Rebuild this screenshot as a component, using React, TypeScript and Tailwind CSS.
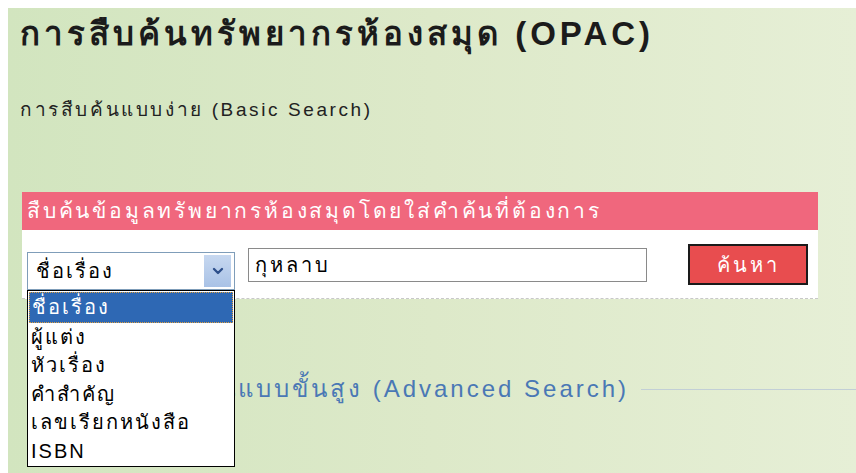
import { ChevronDown } from 'lucide-react'

const fieldOptions = ['ชื่อเรื่อง', 'ผู้แต่ง', 'หัวเรื่อง', 'คำสำคัญ', 'เลขเรียกหนังสือ', 'ISBN']

const thaiFont = "font-['Tahoma','Liberation_Sans','Noto_Sans',sans-serif]"

export default function App() {
  return (
    <div className={`w-[856px] h-[473px] overflow-hidden bg-white pl-2 pt-2 ${thaiFont}`}>
      <div className="relative h-full bg-gradient-to-r from-[#d2e5bf] via-[#dde9c9] to-[#e6efd6] pl-3 pt-[6px]">
        {/* Page title */}
        <h1 className="text-[33px] font-bold leading-[40px] tracking-[4px] text-[#1b1b1b]">
          การสืบค้นทรัพยากรห้องสมุด (OPAC)
        </h1>

        <p className="mt-[44px] text-[19px] leading-6 tracking-[2.6px] text-[#222]">
          การสืบค้นแบบง่าย (Basic Search)
        </p>

        {/* Basic search panel */}
        <div className="mt-[70px] ml-[2px] w-[796px] bg-white border-b border-dashed border-[#c8c8c8]">
          <div className="h-[38px] bg-[#f0677d] px-[5px] text-[21px] leading-[38px] tracking-[2.8px] text-white">
            สืบค้นข้อมูลทรัพยากรห้องสมุดโดยใส่คำค้นที่ต้องการ
          </div>
          <div className="flex items-start h-[68px] pl-[5px] pt-[14px]">
            <div className="relative mt-[8px] flex h-[38px] w-[208px] items-center border border-[#7f9db9] bg-white">
              <span className="flex-1 pl-2 text-[20px] tracking-[2px] text-black">ชื่อเรื่อง</span>
              <span className="mr-[3px] flex h-[32px] w-[27px] items-center justify-center bg-gradient-to-b from-[#c7d8f0] to-[#a9c2e6]">
                <ChevronDown className="h-4 w-4 text-[#2d4f8a]" strokeWidth={3.5} />
              </span>

              {/* Open option list */}
              <ul className="absolute left-[-1px] top-[37px] z-10 w-[208px] border border-black bg-white py-px text-[20px] leading-[28.5px] tracking-[2px] text-black">
                {fieldOptions.map((opt, i) => (
                  <li
                    key={opt}
                    className={
                      i === 0
                        ? 'mx-px border border-dotted border-[#e0a040] bg-[#2e68b4] pl-[2px] text-white'
                        : 'px-[3px]'
                    }
                  >
                    {opt}
                  </li>
                ))}
              </ul>
            </div>

            <div className="ml-[13px] mt-[4px] flex h-[34px] w-[399px] items-center border border-[#8a8a8a] bg-white pl-[6px] text-[20px] tracking-[3px] text-black">
              กุหลาบ
            </div>

            <button className="ml-[41px] h-[41px] w-[120px] border-2 border-[#1a1a1a] bg-[#e84d4f] text-[20px] tracking-[3px] text-white">
              ค้นหา
            </button>
          </div>
        </div>

        {/* Advanced search legend */}
        <div className="mt-[72px] flex items-center">
          <span className="pl-[94px] text-[24px] tracking-[3px] text-[#4a78b5]">
            การสืบค้นแบบขั้นสูง (Advanced Search)
          </span>
          <span className="ml-[12px] h-px flex-1 bg-[#c2cfd6]" />
        </div>
      </div>
    </div>
  )
}
